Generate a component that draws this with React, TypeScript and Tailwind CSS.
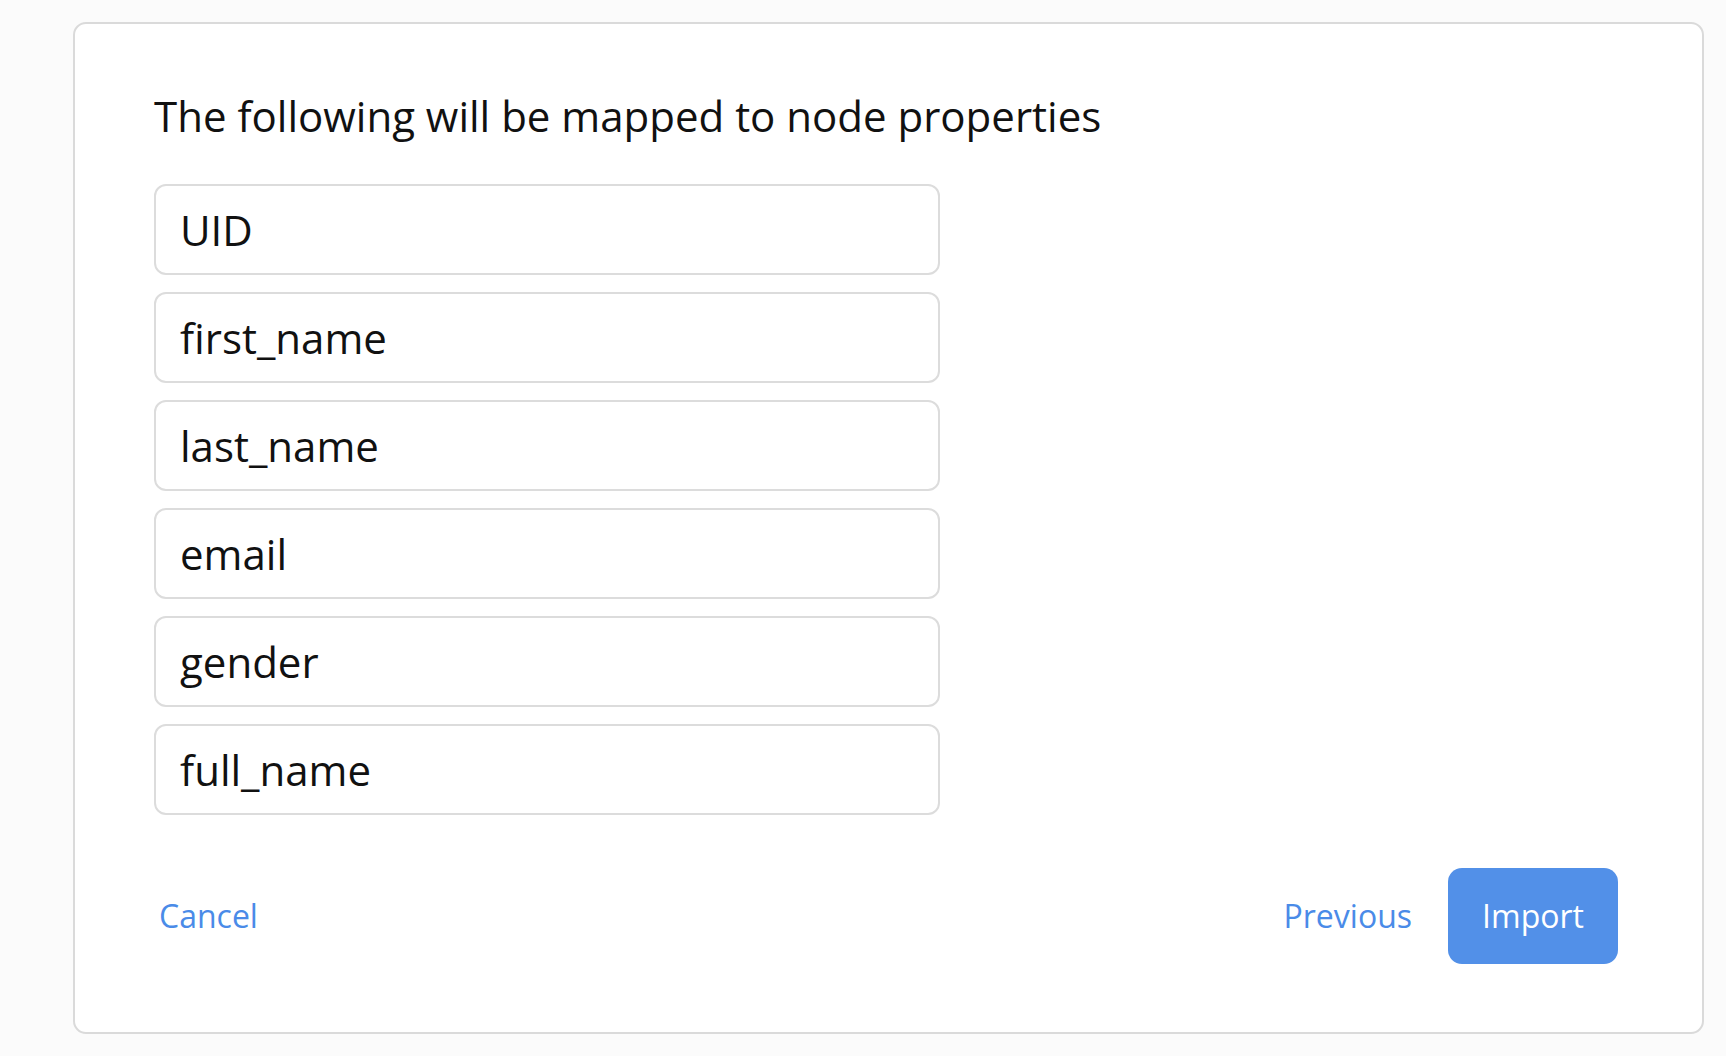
import React from "react";

const fields = ["UID", "first_name", "last_name", "email", "gender", "full_name"];

export default function App() {
  return (
    <div
      className="min-h-[1056px] w-full bg-[#fbfbfb] pl-[73px] pr-[22px] pt-[22px] pb-[22px]"
      style={{ fontFamily: '"Open Sans", "Noto Sans", sans-serif' }}
    >
      <div className="flex h-[1012px] flex-col rounded-[13px] border-2 border-[#dadada] bg-white pl-[79px] pr-[84px] pt-[63px]">
        <h1 className="text-[42px] leading-[58px] text-[#111] font-normal">
          The following will be mapped to node properties
        </h1>
        <div className="mt-[39px] flex w-[786px] flex-col gap-[17px]">
          {fields.map((f) => (
            <div
              key={f}
              className="flex h-[91px] items-center rounded-[12px] border-2 border-[#dcdcdc] bg-white pl-[24px]"
            >
              <span className="text-[42px] leading-[58px] text-[#111]">{f}</span>
            </div>
          ))}
        </div>
        <div className="mt-[53px] flex items-center justify-between">
          <button className="pl-[5px] text-[32px] leading-[44px] text-[#4a8be8]">Cancel</button>
          <div className="flex items-center gap-[36px]">
            <button className="text-[32px] leading-[44px] text-[#4a8be8]">Previous</button>
            <button className="flex h-[96px] w-[170px] items-center justify-center rounded-[14px] bg-[#5290e8] text-[32px] leading-[44px] text-white">
              Import
            </button>
          </div>
        </div>
      </div>
    </div>
  );
}
